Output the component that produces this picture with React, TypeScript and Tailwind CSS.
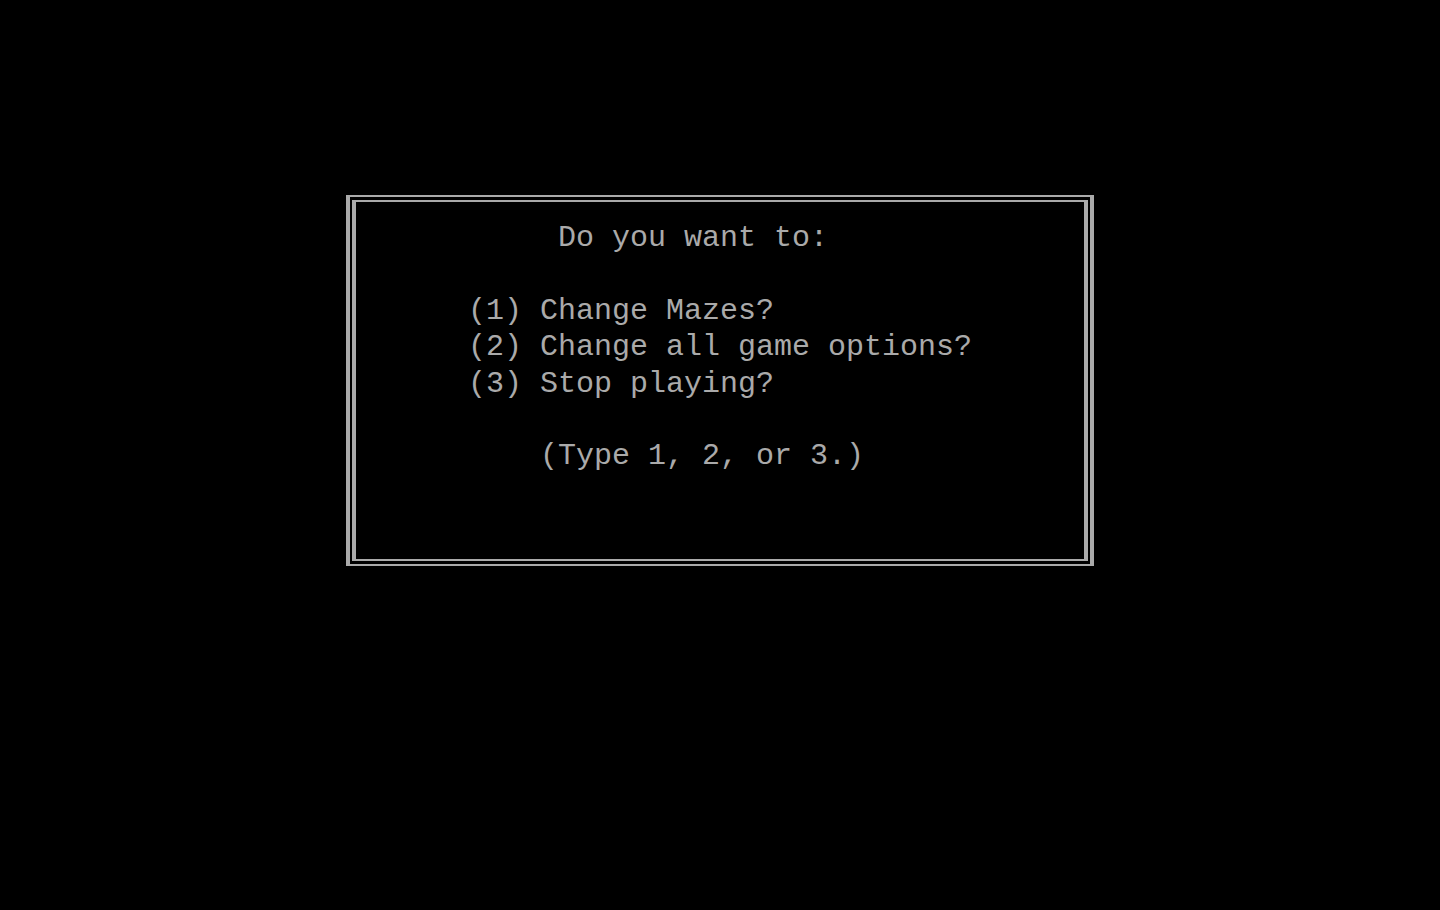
const lines = [
  "     Do you want to:",
  "",
  "(1) Change Mazes?",
  "(2) Change all game options?",
  "(3) Stop playing?",
  "",
  "    (Type 1, 2, or 3.)",
];

const App = () => {
  return (
    <div className="w-[1440px] h-[910px] bg-black flex justify-center pt-[195px] overflow-hidden">
      <div className="w-[748px] h-[371px] border-x-4 border-y-2 border-[#aaaaaa] px-[2px] py-[3px]">
        <div className="w-full h-full border-x-4 border-y-2 border-[#aaaaaa]">
          <pre
            className="pl-[112px] pt-[18px] text-[30px] leading-[36.4px] text-[#aaaaaa] m-0"
            style={{ fontFamily: '"Liberation Mono", "DejaVu Sans Mono", monospace' }}
          >
            {lines.map((line, i) => (
              <div key={i} className="h-[36.4px]">
                {line}
              </div>
            ))}
          </pre>
        </div>
      </div>
    </div>
  );
};

export default App;
